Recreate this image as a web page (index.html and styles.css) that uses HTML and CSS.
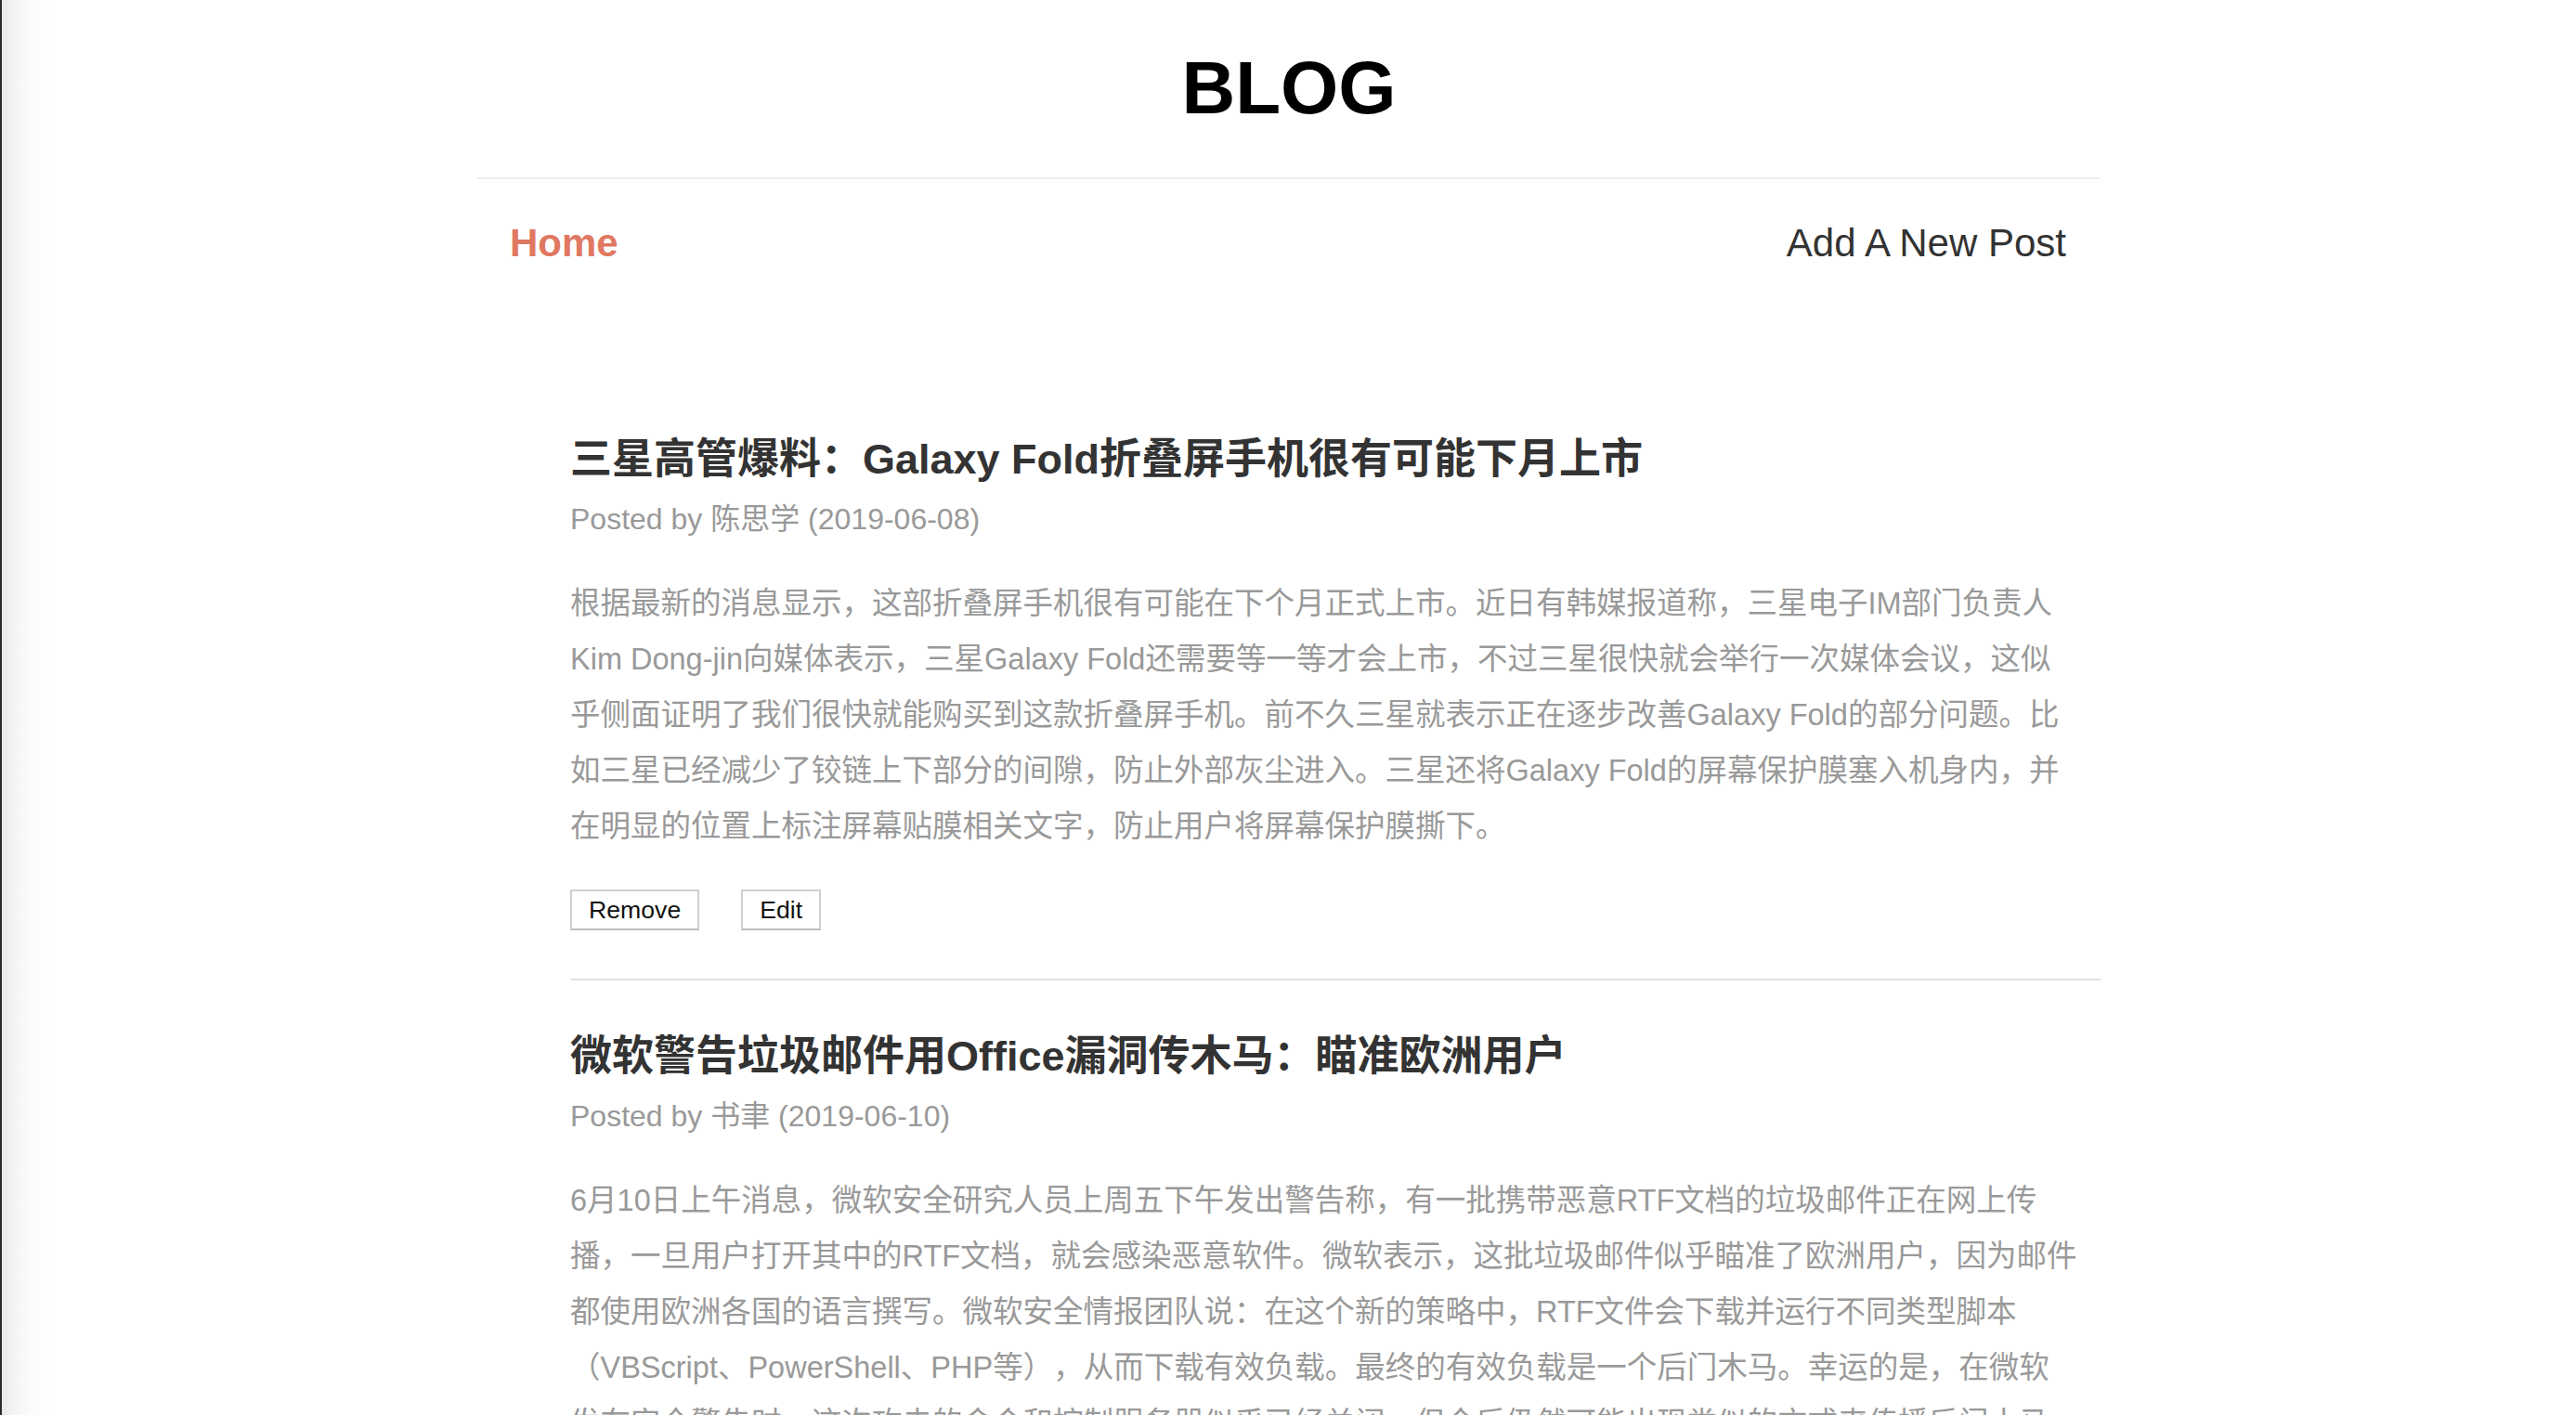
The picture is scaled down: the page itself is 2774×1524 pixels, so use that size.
FILE: index.html
```html
<!DOCTYPE html>
<html lang="zh-CN">
<head>
<meta charset="utf-8">
<title>BLOG</title>
<link rel="stylesheet" href="styles.css">
</head>
<body>
<div class="page">
  <div class="wrap">
    <header class="site-header">
      <h1 class="logo">BLOG</h1>
    </header>
    <nav class="nav">
      <a class="nav-link nav-active" href="#">Home</a>
      <a class="nav-link" href="#">Add A New Post</a>
    </nav>
    <main class="posts">
      <article class="post">
        <h2 class="post-title">三星高管爆料：Galaxy Fold折叠屏手机很有可能下月上市</h2>
        <div class="post-meta">Posted by 陈思学 (2019-06-08)</div>
        <p class="post-body">根据最新的消息显示，这部折叠屏手机很有可能在下个月正式上市。近日有韩媒报道称，三星电子IM部门负责人<br>Kim Dong-jin向媒体表示，三星Galaxy Fold还需要等一等才会上市，不过三星很快就会举行一次媒体会议，这似<br>乎侧面证明了我们很快就能购买到这款折叠屏手机。前不久三星就表示正在逐步改善Galaxy Fold的部分问题。比<br>如三星已经减少了铰链上下部分的间隙，防止外部灰尘进入。三星还将Galaxy Fold的屏幕保护膜塞入机身内，并<br>在明显的位置上标注屏幕贴膜相关文字，防止用户将屏幕保护膜撕下。</p>
        <div class="post-actions">
          <button class="btn" type="button">Remove</button>
          <button class="btn" type="button">Edit</button>
        </div>
      </article>
      <article class="post">
        <h2 class="post-title">微软警告垃圾邮件用Office漏洞传木马：瞄准欧洲用户</h2>
        <div class="post-meta">Posted by 书聿 (2019-06-10)</div>
        <p class="post-body">6月10日上午消息，微软安全研究人员上周五下午发出警告称，有一批携带恶意RTF文档的垃圾邮件正在网上传<br>播，一旦用户打开其中的RTF文档，就会感染恶意软件。微软表示，这批垃圾邮件似乎瞄准了欧洲用户，因为邮件<br>都使用欧洲各国的语言撰写。微软安全情报团队说：在这个新的策略中，RTF文件会下载并运行不同类型脚本<br>（VBScript、PowerShell、PHP等），从而下载有效负载。最终的有效负载是一个后门木马。幸运的是，在微软<br>发布安全警告时，这次攻击的命令和控制服务器似乎已经关闭，但今后仍然可能出现类似的方式来传播后门木马。</p>
        <div class="post-actions">
          <button class="btn" type="button">Remove</button>
          <button class="btn" type="button">Edit</button>
        </div>
      </article>
    </main>
  </div>
</div>
</body>
</html>
```

FILE: styles.css
```css
html, body {
  margin: 0;
  padding: 0;
}

body {
  font-family: "Liberation Sans", "Noto Sans CJK SC", sans-serif;
  color: #333;
  background: #fff;
}

.page {
  min-height: 100vh;
  border-left: 2px solid #2b2b2b;
  background: linear-gradient(to right, #e9e9e9 0, #f5f5f5 14px, #fcfcfc 34px, #ffffff 52px);
}

.wrap {
  width: 1748px;
  margin: 0 auto;
}

.site-header {
  padding: 55px 0 56px;
  border-bottom: 2px solid #eeeeee;
  text-align: center;
}

.logo {
  margin: 0;
  font-size: 80px;
  line-height: 80px;
  font-weight: 700;
  color: #000;
}

.nav {
  display: flex;
  justify-content: space-between;
  align-items: center;
  padding: 48px 37px 48px 35px;
  font-size: 42px;
  line-height: 42px;
}

.nav-link {
  color: #333;
  text-decoration: none;
}

.nav-active {
  color: #e07862;
  font-weight: 700;
}

.posts {
  padding: 82px 0 0 100px;
}

.post {
  padding: 55px 0 52px;
  border-bottom: 2px solid #e2e2e2;
}

.post-title {
  margin: 0;
  font-size: 45px;
  line-height: 54px;
  font-weight: 700;
  color: #333;
}

.post-meta {
  margin-top: 17px;
  font-size: 32px;
  line-height: 40px;
  color: #999;
}

.post-body {
  margin: 41px 0 0;
  font-size: 32.5px;
  line-height: 60px;
  color: #999;
  white-space: nowrap;
  text-spacing-trim: space-all;
}

.post-actions {
  display: flex;
  gap: 45px;
  margin-top: 38px;
}

.btn {
  box-sizing: border-box;
  height: 44px;
  padding: 5px 18px;
  font-family: "Liberation Sans", sans-serif;
  font-size: 26.67px;
  line-height: 30px;
  color: #111;
  background: #fff;
  border: 2px solid #cfcfcf;
  border-bottom-color: #bdbdbd;
  border-radius: 0;
}
```
